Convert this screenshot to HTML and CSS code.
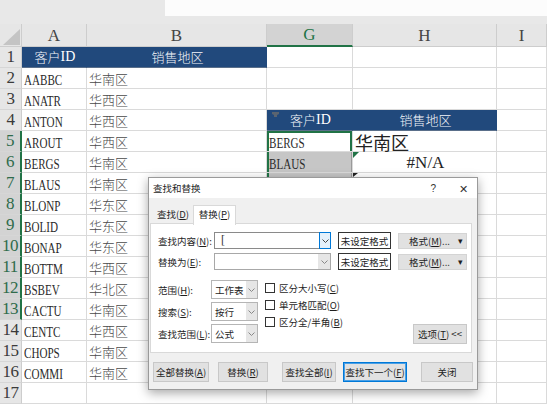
FILE: index.html
```html
<!DOCTYPE html>
<html>
<head>
<meta charset="utf-8">
<link rel="stylesheet" href="styles.css">
</head>
<body>
<div class="app">
  <div class="topband"><div class="fbox"></div></div>
  <div class="sheet">
    <div class="corner"><svg class="tri" width="17" height="16" viewBox="0 0 17 16"><polygon points="17,0 17,16 0,16" fill="#c4c4c4"/></svg></div>
    <div class="ch">A</div><div class="ch">B</div><div class="ch on">G</div><div class="ch">H</div><div class="ch">I</div>

    <div class="rh">1</div><div class="c hd"><span class="zh">客户</span><span class="lat">ID</span></div><div class="c hd"><span class="zh">销售地区</span></div><div class="c"></div><div class="c"></div><div class="c"></div>
    <div class="rh">2</div><div class="c"><span class="id">AABBC</span></div><div class="c"><span class="zh">华南区</span></div><div class="c"></div><div class="c"></div><div class="c"></div>
    <div class="rh">3</div><div class="c"><span class="id">ANATR</span></div><div class="c"><span class="zh">华西区</span></div><div class="c"></div><div class="c"></div><div class="c"></div>
    <div class="rh">4</div><div class="c"><span class="id">ANTON</span></div><div class="c"><span class="zh">华西区</span></div><div class="c hd"><svg class="smart" width="9" height="7" viewBox="0 0 9 7"><path d="M1 1h7v2l-2 1v2h-3v-2l-2-1z" fill="#5a6470"/></svg><span class="zh">客户</span><span class="lat">ID</span></div><div class="c hd"><span class="zh">销售地区</span></div><div class="c"></div>
    <div class="rh on">5</div><div class="c"><span class="id">AROUT</span></div><div class="c"><span class="zh">华西区</span></div><div class="c act"><span class="id">BERGS</span></div><div class="c"><span class="zh big">华南区</span></div><div class="c"></div>
    <div class="rh on">6</div><div class="c"><span class="id">BERGS</span></div><div class="c"><span class="zh">华南区</span></div><div class="c rng"><span class="id">BLAUS</span></div><div class="c ctr"><i class="gtri"></i><span class="na">#N/A</span></div><div class="c"></div>
    <div class="rh on">7</div><div class="c"><span class="id">BLAUS</span></div><div class="c"><span class="zh">华南区</span></div><div class="c rng"></div><div class="c"><i class="btri"></i></div><div class="c"></div>
    <div class="rh on">8</div><div class="c"><span class="id">BLONP</span></div><div class="c"><span class="zh">华东区</span></div><div class="c rng"></div><div class="c"></div><div class="c"></div>
    <div class="rh on">9</div><div class="c"><span class="id">BOLID</span></div><div class="c"><span class="zh">华东区</span></div><div class="c rng"></div><div class="c"></div><div class="c"></div>
    <div class="rh on">10</div><div class="c"><span class="id">BONAP</span></div><div class="c"><span class="zh">华东区</span></div><div class="c rng"></div><div class="c"></div><div class="c"></div>
    <div class="rh on">11</div><div class="c"><span class="id">BOTTM</span></div><div class="c"><span class="zh">华西区</span></div><div class="c rng"></div><div class="c"></div><div class="c"></div>
    <div class="rh on">12</div><div class="c"><span class="id">BSBEV</span></div><div class="c"><span class="zh">华北区</span></div><div class="c rng"></div><div class="c"></div><div class="c"></div>
    <div class="rh on">13</div><div class="c"><span class="id">CACTU</span></div><div class="c"><span class="zh">华南区</span></div><div class="c rng"></div><div class="c"></div><div class="c"></div>
    <div class="rh">14</div><div class="c"><span class="id">CENTC</span></div><div class="c"><span class="zh">华西区</span></div><div class="c"></div><div class="c"></div><div class="c"></div>
    <div class="rh">15</div><div class="c"><span class="id">CHOPS</span></div><div class="c"><span class="zh">华南区</span></div><div class="c"></div><div class="c"></div><div class="c"></div>
    <div class="rh">16</div><div class="c"><span class="id">COMMI</span></div><div class="c"><span class="zh">华南区</span></div><div class="c"></div><div class="c"></div><div class="c"></div>
    <div class="rh">17</div><div class="c"></div><div class="c"></div><div class="c"></div><div class="c"></div><div class="c"></div>
  </div>

  <div class="dlg">
    <div class="title">
      <span>查找和替换</span>
      <span class="q">?</span>
      <span class="x">✕</span>
    </div>
    <div class="tabs">
      <div class="tab">查找(<u>D</u>)</div>
      <div class="tab cur">替换(<u>P</u>)</div>
    </div>
    <div class="panel">
      <div class="frow">
        <span class="lbl">查找内容(<u>N</u>):</span>
        <div class="combo focus"><span class="cursor">[</span><span class="dd"><svg width="7" height="4" viewBox="0 0 7 4"><path d="M.5.5 3.5 3.5 6.5.5" fill="none" stroke="#444"/></svg></span></div>
        <div class="fmtbox">未设定格式</div>
        <div class="fbtn"><span>格式(<u>M</u>)...</span><span class="car">▾</span></div>
      </div>
      <div class="frow r2">
        <span class="lbl">替换为(<u>E</u>):</span>
        <div class="combo"><span class="dd"><svg width="7" height="4" viewBox="0 0 7 4"><path d="M.5.5 3.5 3.5 6.5.5" fill="none" stroke="#888"/></svg></span></div>
        <div class="fmtbox">未设定格式</div>
        <div class="fbtn"><span>格式(<u>M</u>)...</span><span class="car">▾</span></div>
      </div>
      <div class="opts">
        <div class="selcol">
          <div class="srow"><span class="lbl2">范围(<u>H</u>):</span><div class="dsel">工作表<span class="sdd"><svg width="7" height="4" viewBox="0 0 7 4"><path d="M.5.5 3.5 3.5 6.5.5" fill="none" stroke="#888"/></svg></span></div></div>
          <div class="srow"><span class="lbl2">搜索(<u>S</u>):</span><div class="dsel">按行<span class="sdd"><svg width="7" height="4" viewBox="0 0 7 4"><path d="M.5.5 3.5 3.5 6.5.5" fill="none" stroke="#888"/></svg></span></div></div>
          <div class="srow"><span class="lbl2">查找范围(<u>L</u>):</span><div class="dsel">公式<span class="sdd"><svg width="7" height="4" viewBox="0 0 7 4"><path d="M.5.5 3.5 3.5 6.5.5" fill="none" stroke="#888"/></svg></span></div></div>
        </div>
        <div class="chkcol">
          <div class="chk"><i class="box"></i>区分大小写(<u>C</u>)</div>
          <div class="chk"><i class="box"></i>单元格匹配(<u>O</u>)</div>
          <div class="chk"><i class="box"></i>区分全/半角(<u>B</u>)</div>
        </div>
        <div class="btn optbtn">选项(<u>T</u>) &lt;&lt;</div>
      </div>
    </div>
    <div class="brow">
      <div class="btn b1">全部替换(<u>A</u>)</div>
      <div class="btn b2">替换(<u>R</u>)</div>
      <div class="btn b3">查找全部(<u>I</u>)</div>
      <div class="btn b4 def">查找下一个(<u>F</u>)</div>
      <div class="btn b5">关闭</div>
    </div>
  </div>
</div>
</body>
</html>
```

FILE: styles.css
```css
* { box-sizing: border-box; margin: 0; padding: 0; }
html, body { width: 547px; height: 404px; overflow: hidden; background: #fff; }
body { font-family: "Liberation Serif", "Noto Sans CJK SC", serif; color: #222; }
.app { position: relative; width: 547px; height: 404px; overflow: hidden; }

.topband { height: 24px; background: #e8e8e8; display: flex; }
.fbox { margin-left: 165px; flex: 1; height: 16px; background: #fcfcfc; }

.sheet {
  display: grid;
  grid-template-columns: 22px 65px 180px 86px 144px 50px;
  grid-template-rows: 23px repeat(17, 21px);
}
.corner { background: #e6e6e6; border-right: 1px solid #cdcdcd; border-bottom: 1px solid #cdcdcd; display: flex; align-items: flex-end; justify-content: flex-end; padding: 0 1px 1px 0; }
.ch { background: #e6e6e6; border-right: 1px solid #cdcdcd; border-bottom: 1px solid #cdcdcd; display: flex; align-items: center; justify-content: center; font-size: 17px; color: #444; padding-top: 1px; }
.ch.on { background: #d3d3d3; color: #217346; border-bottom: 2px solid #217346; }
.rh { background: #e6e6e6; border-right: 1px solid #cdcdcd; border-bottom: 1px solid #d6d6d6; display: flex; align-items: center; justify-content: center; font-size: 17px; color: #3a3a3a; letter-spacing: -0.5px; overflow: hidden; }
.rh.on { background: #d3d3d3; color: #2f6b4b; border-right: 2px solid #217346; }

.c { border-right: 1px solid #dadada; border-bottom: 1px solid #dadada; display: flex; align-items: flex-end; padding: 0 0 1px 2px; white-space: nowrap; position: relative; }
.c.ctr { justify-content: center; }
.c.hd { background: #21497c; color: #fff; justify-content: center; align-items: center; border-color: #21497c; border-bottom-color: #5a6f8a; }
.c.act { box-shadow: inset 2px 2px 0 #217346, inset -2px 0 0 #217346; }
.c.rng { background: #c6c6c6; box-shadow: inset 2px 0 0 #217346, inset -1px 0 0 #9a9a9a; }

.zh { font-family: "Noto Sans CJK SC", sans-serif; font-size: 13px; line-height: 16px; color: #4a4a4a; font-weight: 300; }
.hd .zh { color: #f4f6fa; }
.lat { font-family: "Liberation Serif", serif; font-size: 14px; line-height: 16px; }
.id { font-family: "Liberation Serif", serif; font-size: 15px; line-height: 14px; display: inline-block; transform: scaleX(.74); transform-origin: 0 100%; color: #2a2a2a; }
.big { font-size: 18px; line-height: 19px; margin-bottom: -2px; color: #222; font-weight: 400; }
.na { font-family: "Liberation Serif", serif; font-size: 17px; line-height: 16px; color: #222; }
.smart { position: absolute; left: 4px; top: 1px; }
.gtri { position: absolute; left: 0; top: 0; width: 0; height: 0; border-top: 6px solid #217346; border-right: 6px solid transparent; }
.btri { position: absolute; left: 0; top: 0; width: 0; height: 0; border-top: 4px solid #222; border-right: 5px solid transparent; }

/* dialog */
.dlg {
  position: absolute; left: 148px; top: 177px; width: 330px; height: 213px;
  background: #f0f0f0; border: 1px solid #9a9a9a;
  box-shadow: 0 3px 10px rgba(0,0,0,.35);
  font-family: "Noto Sans CJK SC", sans-serif; font-size: 9.5px; color: #1e1e1e;
  display: flex; flex-direction: column; white-space: nowrap;
}
.title { height: 20px; background: #fff; display: flex; align-items: center; padding-left: 4px; }
.title .q { margin-left: auto; font-family: "Liberation Sans", sans-serif; font-size: 10px; color: #333; }
.title .x { margin: 0 9px 0 23px; font-size: 11px; color: #333; }

.tabs { margin-top: 7px; height: 19px; display: flex; padding-left: 4px; position: relative; z-index: 1; margin-bottom: -1px; }
.tab { width: 40px; line-height: 19px; text-align: center; }
.tab.cur { width: 43px; background: #fff; border: 1px solid #d9d9d9; border-bottom: none; line-height: 17px; height: 20px; }

.panel { margin: 0 5px 0 1px; height: 130px; background: #fff; border: 1px solid #d9d9d9; padding: 8px 4px 0 7px; }
.frow { display: flex; align-items: center; height: 17px; }
.frow.r2 { margin-top: 4px; }
.lbl { width: 56px; flex: none; }
.combo { width: 117px; height: 17px; border: 1px solid #a8a8a8; background: #fff; display: flex; align-items: center; }
.combo .cursor { margin-left: 6px; font-family: "Liberation Serif", serif; font-size: 12px; color: #333; }
.combo .dd { margin-left: auto; width: 12px; height: 100%; display: flex; align-items: center; justify-content: center; background: #e6e6e6; }
.combo.focus { border-color: #8a8a8a; }
.combo.focus .dd { background: #e5f1fb; border: 1px solid #0078d7; height: 17px; margin-right: -1px; }
.fmtbox { width: 53px; height: 17px; margin-left: 7px; border: 1px solid #333; background: #fff; display: flex; align-items: center; justify-content: center; }
.fbtn { width: 69px; height: 16px; margin-left: 7px; background: #e1e1e1; border: 1px solid #d4d4d4; display: flex; align-items: center; justify-content: flex-end; padding-right: 3px; }
.fbtn .car { margin-left: 8px; font-size: 9px; }

.opts { margin-top: 10px; height: 64px; display: flex; }
.selcol { display: flex; flex-direction: column; gap: 3px; }
.srow { display: flex; align-items: center; height: 19px; }
.lbl2 { width: 53px; flex: none; }
.dsel { width: 47px; height: 19px; border: 1px solid #b5b5b5; background: #fff; display: flex; align-items: center; padding-left: 3px; }
.sdd { margin-left: auto; width: 11px; height: 100%; background: #e6e6e6; display: flex; align-items: center; justify-content: center; }
.chkcol { margin-left: 7px; padding-top: 2px; display: flex; flex-direction: column; gap: 5px; }
.chk { height: 12px; display: flex; align-items: center; }
.box { width: 10px; height: 10px; border: 1px solid #333; background: #fff; margin-right: 4px; }
.btn { height: 20px; background: #e1e1e1; border: 1px solid #c8c8c8; display: flex; align-items: center; justify-content: center; white-space: nowrap; }
.optbtn { margin-left: auto; align-self: flex-end; width: 54px; }

.brow { margin-top: 9px; display: flex; padding-left: 4px; }
.b1 { width: 56px; }
.b2 { width: 50px; margin-left: 9px; }
.b3 { width: 54px; margin-left: 14px; }
.b4 { width: 64px; margin-left: 7px; }
.b5 { width: 52px; margin-left: 14px; }
.btn.def { border: 1px solid #0078d7; box-shadow: inset 0 0 0 1px #4aa0e6; }
u { text-underline-offset: 1px; }
```
